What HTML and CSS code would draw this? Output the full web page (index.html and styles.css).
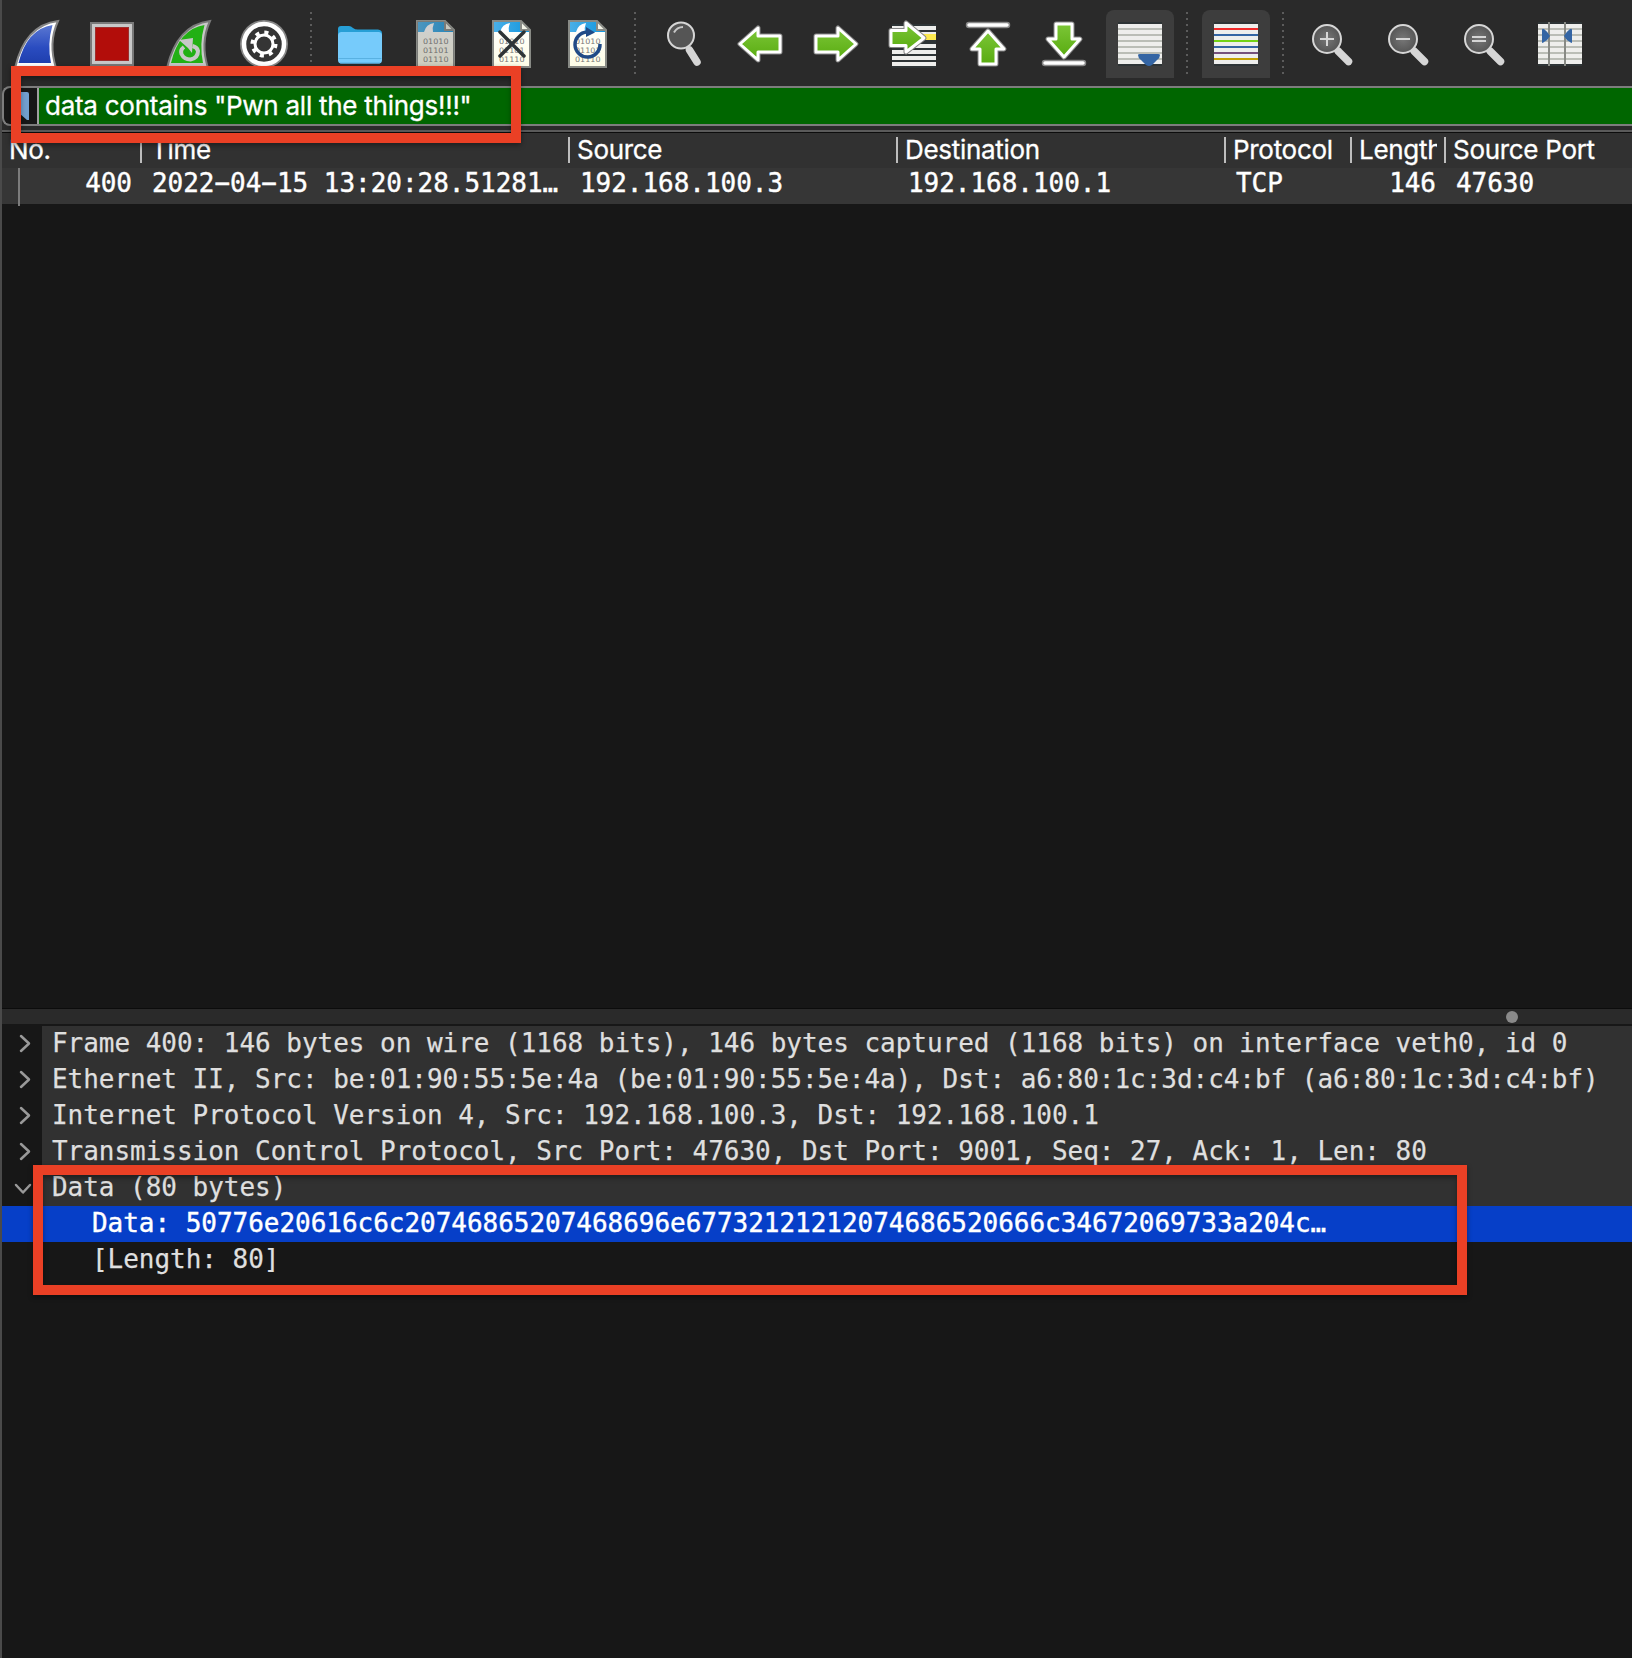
FILE: index.html
```html
<!DOCTYPE html>
<html lang="en">
<head>
<meta charset="utf-8">
<title>Wireshark</title>
<link rel="stylesheet" href="styles.css">
</head>
<body>
<svg width="0" height="0" class="defs">
  <defs>
    <linearGradient id="blue" x1="0" y1="0" x2="0" y2="1"><stop offset="0" stop-color="#5b78d2"/><stop offset=".6" stop-color="#2a4cc0"/><stop offset="1" stop-color="#1f3fae"/></linearGradient>
    <linearGradient id="greenflat" x1="0" y1="0" x2="0" y2="1"><stop offset="0" stop-color="#7cc637"/><stop offset="1" stop-color="#58ab10"/></linearGradient>
    <linearGradient id="sky" x1="0" y1="0" x2="1" y2="0"><stop offset="0" stop-color="#4bb0e8"/><stop offset="1" stop-color="#1296de"/></linearGradient>
    <linearGradient id="paper" x1="0" y1="0" x2="0" y2="1"><stop offset="0" stop-color="#fff"/><stop offset="1" stop-color="#fefde6"/></linearGradient>
    <radialGradient id="lens"><stop offset="0" stop-color="#777"/><stop offset="1" stop-color="#555"/></radialGradient>
    <symbol id="file" viewBox="0 0 48 48" overflow="visible">
      <path d="M5 1H33L42 10V47H5Z" fill="url(#paper)"/>
      <path d="M5 1H33L42 10V12H5Z" fill="url(#sky)"/>
      <path d="M12 12Q14 4 22 3Q20 8 21 12Z" fill="#fff"/>
      <path d="M33 1V10H42Z" fill="#f4f4e8"/>
      <path d="M5 1H33L42 10V47H5ZM33 1V10H42" fill="none" stroke="#888a85" stroke-width="2"/>
      <g class="bits"><text x="11" y="24" textLength="25.500" lengthAdjust="spacingAndGlyphs">01010</text><text x="11" y="33" textLength="25.500" lengthAdjust="spacingAndGlyphs">01101</text><text x="11" y="42" textLength="25.500" lengthAdjust="spacingAndGlyphs">01110</text></g>
    </symbol>
    <symbol id="zoomlens" viewBox="0 0 48 48" overflow="visible">
      <path d="M30 31L40.500 41.500" stroke="#d6d6d6" stroke-width="7.500" stroke-linecap="round"/>
      <circle cx="19" cy="19" r="14" fill="url(#lens)" stroke="#d6d6d6" stroke-width="2"/>
    </symbol>
  </defs>
</svg>
<div class="window">
  <div class="toolbar">
    <svg class="icon" viewBox="0 0 48 48"><path d="M3 48Q13 5 46 1Q36 23 44 48Z" fill="#fff" stroke="#858585" stroke-width="2"/><path d="M6.500 43Q15 9 40.500 5Q35 24 39 43Z" fill="url(#blue)"/></svg>
    <svg class="icon" viewBox="0 0 48 48"><rect x="3" y="3" width="42" height="42" fill="#c8c8c8" stroke="#797979" stroke-width="2"/><rect x="7.500" y="7.500" width="33" height="33" fill="#b20d0a" stroke="#9d2f2d"/></svg>
    <svg class="icon" viewBox="0 0 48 48"><path d="M3 48Q13 5 46 1Q36 23 44 48Z" fill="#c8c8c8" stroke="#797979" stroke-width="2"/><path d="M7 43Q15 9 40.500 5Q35 24 39 43Z" fill="#22b014"/><path d="M20 27Q16 30 17.500 34Q20 39.500 26.500 39.500Q34 38 34 31Q33 27 28.500 26" fill="none" stroke="#c8c8c8" stroke-width="4"/><path d="M15 20L29 18L28 33L24 28Z" fill="#c8c8c8"/></svg>
    <svg class="icon" viewBox="0 0 48 48"><circle cx="24" cy="24" r="24" fill="#888"/><circle cx="24" cy="24" r="20" fill="#353535" stroke="#fff" stroke-width="4.500"/><circle cx="24" cy="24" r="11.500" fill="none" stroke="#fff" stroke-width="4" stroke-dasharray="4 5.030"/><circle cx="24" cy="24" r="9" fill="none" stroke="#fff" stroke-width="3"/></svg>
    <i class="divider"></i>
    <svg class="icon" viewBox="0 0 48 48"><path d="M2 9Q2 6 5 6H13Q15 6 17 8Q19 9.500 22 9.500H42Q46 10 46 13V20H2Z" fill="#279fd6"/><rect x="2" y="12" width="44" height="31.500" rx="3.500" fill="#76cbfb"/><path d="M2.500 38.500H45.500M4 43H44" stroke="#59b1e2" stroke-width="1"/></svg>
    <svg class="icon" viewBox="0 0 48 48"><use href="#file" width="48" height="48"/><path d="M5 1H33L42 10V48H5Z" fill="#555" opacity=".28"/></svg>
    <svg class="icon" viewBox="0 0 48 48"><use href="#file" width="48" height="48"/><path d="M12 12L36 36M36 12L12 36" stroke="#2e3436" stroke-width="3.500" stroke-linecap="round"/></svg>
    <svg class="icon" viewBox="0 0 48 48"><use href="#file" width="48" height="48"/><path d="M23 12A12.500 12.500 0 1 0 36 24" fill="none" stroke="#204a87" stroke-width="3.500"/><path d="M22 7L31 12.500L22 17Z" fill="#204a87"/></svg>
    <i class="divider"></i>
    <svg class="icon" viewBox="0 0 48 48"><path d="M29.500 30L37 42" stroke="#d6d6d6" stroke-width="7.500" stroke-linecap="round"/><circle cx="21" cy="15.500" r="13" fill="#555" stroke="#d6d6d6" stroke-width="2"/><path d="M14 12.500Q17 7 23 7" fill="none" stroke="#c8c8c8" stroke-width="2"/></svg>
    <svg class="icon arrow" viewBox="0 0 48 48"><path d="M4 24L22 8V16H44V32H22V40Z"/><path class="in" d="M4 24L22 8V16H44V32H22V40Z"/></svg>
    <svg class="icon arrow" viewBox="0 0 48 48"><path d="M44 24L26 8V16H4V32H26V40Z"/><path class="in" d="M44 24L26 8V16H4V32H26V40Z"/></svg>
    <svg class="icon arrow" viewBox="0 0 48 48"><rect x="4" y="4" width="44" height="44" fill="#2e3436"/><g fill="#eeeeec"><rect x="4" y="6" width="44" height="4"/><rect x="4" y="12" width="44" height="4"/><rect x="4" y="24" width="44" height="4"/><rect x="4" y="30" width="44" height="4"/><rect x="4" y="36" width="44" height="4"/><rect x="4" y="42" width="44" height="4"/></g><rect x="28" y="14" width="20" height="6" fill="#fce94f"/><path d="M36 18L18 3V10.500H3V25.500H18V32Z"/><path class="in" d="M36 18L18 3V10.500H3V25.500H18V32Z"/></svg>
    <svg class="icon arrow" viewBox="0 0 48 48"><rect x="2.500" y="2.500" width="43" height="5" rx="2.500" fill="#fff" stroke="#888" stroke-width="1.500"/><path d="M24 11L40 29H32V44H16V29H8Z"/><path class="in" d="M24 11L40 29H32V44H16V29H8Z"/></svg>
    <svg class="icon arrow" viewBox="0 0 48 48"><path d="M24 37L40 19H32V4H16V19H8Z"/><path class="in" d="M24 37L40 19H32V4H16V19H8Z"/><rect x="2.500" y="40.500" width="43" height="5" rx="2.500" fill="#fff" stroke="#888" stroke-width="1.500"/></svg>
    <span class="toggle"><svg class="icon" viewBox="0 0 48 48"><rect x="2" y="2" width="44" height="44" fill="#2e3436"/><rect x="2" y="4" width="44" height="40" fill="#eeeeec"/><path d="M2 9H46M2 15H46M2 21H46M2 27H46M2 33H46M2 39H46" stroke="#babdb6" stroke-width="2"/><path d="M22 35Q22 34 24 34H42Q44 34 44 35Q44 38 41 40L36 45Q33 47 30 45L25 40Q22 38 22 35Z" fill="#3465a4"/></svg></span>
    <i class="divider"></i>
    <span class="toggle"><svg class="icon" viewBox="0 0 48 48"><rect x="2" y="2" width="44" height="44" fill="#2e3436"/><rect x="2" y="4" width="44" height="40" fill="#eeeeec"/><g stroke-width="2"><path d="M2 9H46" stroke="#ef2929"/><path d="M2 15H46" stroke="#3465a4"/><path d="M2 21H46" stroke="#73d216"/><path d="M2 27H46" stroke="#3465a4"/><path d="M2 33H46" stroke="#75507b"/><path d="M2 39H46" stroke="#c4a000"/></g></svg></span>
    <i class="divider"></i>
    <svg class="icon" viewBox="0 0 48 48"><use href="#zoomlens" width="48" height="48"/><path d="M12 19H26M19 12V26" stroke="#d6d6d6" stroke-width="2"/></svg>
    <svg class="icon" viewBox="0 0 48 48"><use href="#zoomlens" width="48" height="48"/><path d="M12 19H26" stroke="#d6d6d6" stroke-width="2"/></svg>
    <svg class="icon" viewBox="0 0 48 48"><use href="#zoomlens" width="48" height="48"/><path d="M12 17H26M12 21H26" stroke="#d6d6d6" stroke-width="2"/></svg>
    <svg class="icon" viewBox="0 0 48 48"><rect x="2" y="2" width="44" height="44" fill="#2e3436"/><rect x="2" y="4" width="44" height="40" fill="#eeeeec"/><path d="M2 9H46M2 15H46M2 21H46M2 27H46M2 33H46M2 39H46" stroke="#babdb6" stroke-width="2"/><path d="M13 2V46M29 2V46" stroke="#888a85" stroke-width="2"/><path d="M6 10Q6 8 8 9Q12 12 14 16Q12 20 8 22Q6 24 6 22ZM36 10Q36 8 34 9Q30 12 28 16Q30 20 34 22Q36 24 36 22Z" fill="#3465a4"/></svg>
  </div>
  <div class="filter">
    <div class="bookmark"><svg width="14" height="28" viewBox="0 0 14 28"><path d="M0 0H12Q14 0 14 2V28H12L4 21L0 24Z" fill="#729fcf"/></svg></div>
    <div class="expression">data contains "Pwn all the things!!!"</div>
  </div>
  <div class="packets">
    <div class="cols head"><span>No.</span><span class="time">Time</span><span>Source</span><span>Destination</span><span>Protocol</span><span class="len">Length</span><span>Source Port</span></div>
    <div class="cols row"><span class="num first">400</span><span>2022−04−15 13:20:28.51281…</span><span>192.168.100.3</span><span>192.168.100.1</span><span>TCP</span><span class="num">146</span><span>47630</span></div>
  </div>
  <div class="splitter"><i></i></div>
  <div class="details">
    <div class="item"><svg class="chev" viewBox="0 0 40 36"><path d="M19 10L27 17.500L19 25"/></svg><span>Frame 400: 146 bytes on wire (1168 bits), 146 bytes captured (1168 bits) on interface veth0, id 0</span></div>
    <div class="item"><svg class="chev" viewBox="0 0 40 36"><path d="M19 10L27 17.500L19 25"/></svg><span>Ethernet II, Src: be:01:90:55:5e:4a (be:01:90:55:5e:4a), Dst: a6:80:1c:3d:c4:bf (a6:80:1c:3d:c4:bf)</span></div>
    <div class="item"><svg class="chev" viewBox="0 0 40 36"><path d="M19 10L27 17.500L19 25"/></svg><span>Internet Protocol Version 4, Src: 192.168.100.3, Dst: 192.168.100.1</span></div>
    <div class="item"><svg class="chev" viewBox="0 0 40 36"><path d="M19 10L27 17.500L19 25"/></svg><span>Transmission Control Protocol, Src Port: 47630, Dst Port: 9001, Seq: 27, Ack: 1, Len: 80</span></div>
    <div class="item"><svg class="chev" viewBox="0 0 40 36"><path d="M14 15L21 22.500L28 15"/></svg><span>Data (80 bytes)</span></div>
    <div class="leaf selected">Data: 50776e20616c6c20746865207468696e67732121212074686520666c34672069733a204c…</div>
    <div class="leaf">[Length: 80]</div>
  </div>
  <div class="mark mark-filter"></div>
  <div class="mark mark-data"></div>
</div>
</body>
</html>
```
FILE: styles.css
```css
* { box-sizing: border-box; }
body { margin: 0; background: #171717; }
.defs { position: absolute; }
.window {
  position: relative;
  width: 1632px;
  height: 1658px;
  overflow: hidden;
  border-left: 2px solid #4a4a4a;
  display: flex;
  flex-direction: column;
  background: #171717;
  font: 26px/34px "DejaVu Sans Mono", monospace;
  letter-spacing: -.03px;
  color: #dfdfdf;
}
.toolbar {
  height: 86px;
  flex: none;
  display: flex;
  align-items: flex-start;
  padding: 10px 0 0 10px;
  gap: 28px;
  background: #2a2a2a;
}
.icon { width: 48px; height: 48px; margin-top: 10px; flex: none; display: block; overflow: visible; }
.divider {
  width: 2px;
  height: 62px;
  margin: 2px -4px 0 -6px;
  flex: none;
  background: repeating-linear-gradient(#5c5c5c 0 2px, transparent 2px 6px);
}
.toggle { width: 68px; height: 68px; margin: 0 -10px; padding: 0 10px; flex: none; background: #3d3d3d; border-radius: 8px 8px 0 0; }
.toggle .icon { position: relative; top: 10px; margin-top: 0; }
.bits { font: 7.500px "DejaVu Sans", sans-serif; fill: #777; letter-spacing: 0; }
.arrow { stroke-linejoin: round; }
.arrow path { fill: #fff; stroke: #858585; stroke-width: 5px; }
.arrow path.in { fill: url(#greenflat); stroke: #fff; stroke-width: 3px; }
.filter {
  height: 40px;
  flex: none;
  display: flex;
  border: 2px solid #7d7d7d;
  border-right: 0;
  border-radius: 8px 0 0 8px;
  background: #171717;
  box-shadow: 0 0 0 4px #2a2a2a;
  font: 26px/36px Inter, sans-serif;
  color: #fff;
}
.bookmark { width: 35px; border-right: 2px solid #a0a0a0; padding: 4px 0 0 10px; }
.bookmark svg { display: block; margin-left: 1px; }
.expression { flex: 1; background: #006600; padding-left: 6px; letter-spacing: -.26px; white-space: pre; -webkit-text-stroke: .3px #fff; }
.packets { height: 882px; flex: none; padding-top: 7px; background: linear-gradient(#2a2a2a 4px, #5a5a5a 4px 6px, #0c0c0c 6px 7px, transparent 7px); }
.cols { display: grid; grid-template-columns: 138px 428px 328px 328px 126px 94px 1fr; white-space: pre; color: #fff; }
.head { height: 35px; background: #313131; font: 26px/35px Inter, sans-serif; letter-spacing: -.3px; -webkit-text-stroke: .3px #fff; }
.head span {
  height: 35px;
  line-height: 34px;
  padding-left: 9px;
  background: linear-gradient(#bdbdbd, #bdbdbd) 0 4px / 2px 26px no-repeat;
  overflow: hidden;
}
.head span:first-child { background: none; padding-left: 7px; }
.head .time { padding-left: 11px; }
.head .len { margin-right: 7px; }
.row { height: 36px; line-height: 30px; background: #363636; -webkit-text-stroke: .4px #fff; }
.row span { padding-left: 12px; }
.row .num { text-align: right; padding: 0 8px 0 0; }
.row .first { height: 38px; background: linear-gradient(#7c7c7c, #7c7c7c) 16px 0 / 2px 100% no-repeat; }
.splitter { height: 18px; flex: none; display: flex; align-items: center; justify-content: flex-end; padding-right: 114px; background: #2a2a2a; border-top: 1px solid #0c0c0c; border-bottom: 2px solid #171717; }
.splitter i { width: 12px; height: 12px; border-radius: 50%; background: #8a8a8a; }
.item { display: flex; height: 36px; }
.chev { width: 40px; height: 36px; flex: none; fill: none; stroke: #999; stroke-width: 2.5px; stroke-linecap: round; stroke-linejoin: round; }
.item span, .leaf { white-space: pre; -webkit-text-stroke: .25px #dfdfdf; }
.item span { flex: 1; padding-left: 10px; background: #313131; }
.leaf { height: 36px; padding-left: 90px; }
.leaf.selected { background: #063fc8; color: #fff; -webkit-text-stroke: .4px #fff; }
.mark { position: absolute; border: 10px solid #ea4025; box-shadow: 0 2px 5px rgba(0,0,0,.4), inset 0 3px 5px rgba(0,0,0,.35); }
.mark-filter { left: 9px; top: 66px; width: 510px; height: 77px; }
.mark-data { left: 31px; top: 1165px; width: 1434px; height: 130px; }
```
